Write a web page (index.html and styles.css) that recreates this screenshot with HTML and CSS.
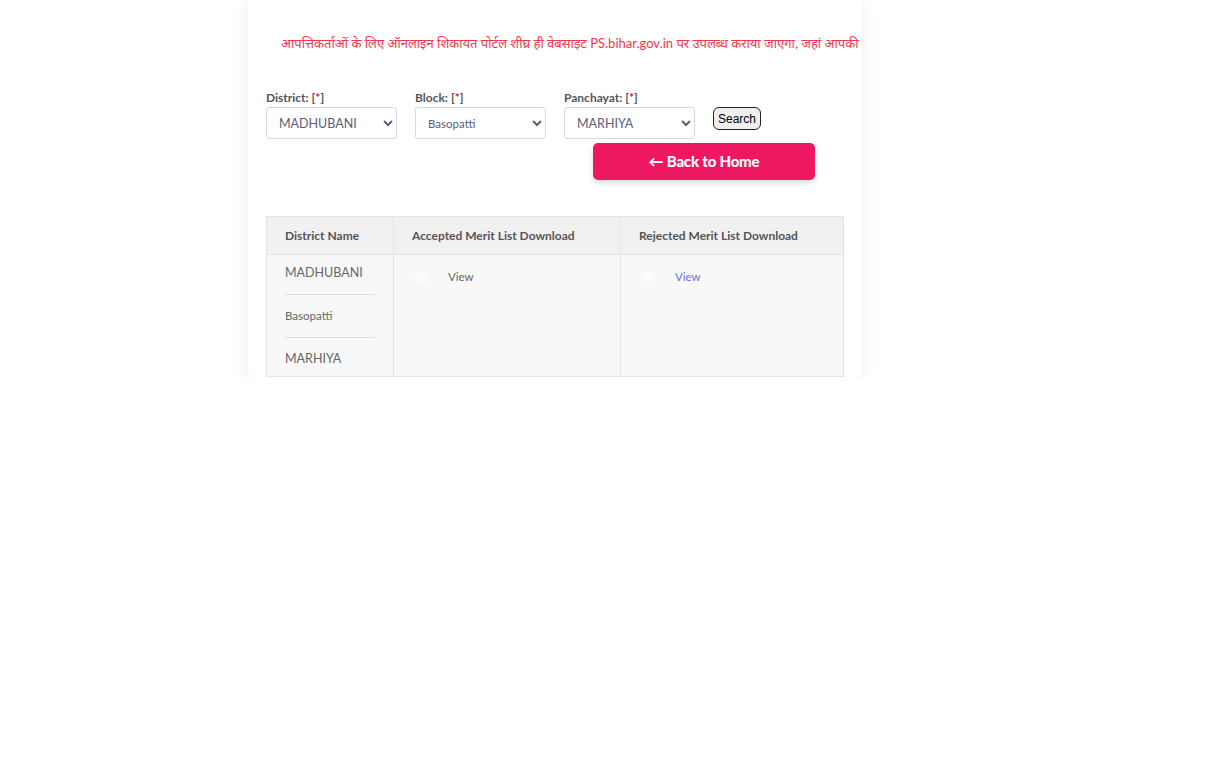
FILE: index.html
```html
<!DOCTYPE html>
<html lang="hi">

<head>
  <meta charset="UTF-8" />
  <meta name="viewport" content="width=device-width, initial-scale=1.0" />
  <title>Merit List</title>
  <link rel="stylesheet" href="styles.css">
</head>

<body>
  <div class="card">
    <!-- Notice strip -->
    <div class="notice">
      <span>आपत्तिकर्ताओं के लिए ऑनलाइन शिकायत पोर्टल शीघ्र ही वेबसाइट PS.bihar.gov.in पर उपलब्ध कराया जाएगा, जहां आपकी आपत्ति दर्ज की जा सकेगी।</span>
    </div>

    <!-- Filters -->
    <form class="filters">
      <div class="field">
        <label for="district">District: [<span class="req">*</span>]</label>
        <select id="district">
          <option>MADHUBANI</option>
        </select>
      </div>
      <div class="field">
        <label for="block">Block: [<span class="req">*</span>]</label>
        <select id="block" class="small">
          <option>Basopatti</option>
        </select>
      </div>
      <div class="field">
        <label for="panchayat">Panchayat: [<span class="req">*</span>]</label>
        <select id="panchayat">
          <option>MARHIYA</option>
        </select>
      </div>
      <button type="button" class="search">Search</button>
    </form>

    <div class="home-row">
      <a href="#" class="home-btn">&larr; Back to Home</a>
    </div>

    <!-- Result table -->
    <table class="merit">
      <thead>
        <tr>
          <th class="col-name">District Name</th>
          <th class="col-acc">Accepted Merit List Download</th>
          <th>Rejected Merit List Download</th>
        </tr>
      </thead>
      <tbody>
        <tr>
          <td class="names">
            <div class="name-item">MADHUBANI</div>
            <div class="name-item small">Basopatti</div>
            <div class="name-item">MARHIYA</div>
          </td>
          <td class="view-cell"><span class="dot"></span><a href="#" class="view plain">View</a></td>
          <td class="view-cell"><span class="dot"></span><a href="#" class="view">View</a></td>
        </tr>
      </tbody>
    </table>
  </div>
</body>

</html>
```

FILE: styles.css
```css
/* Page */
body {
  margin: 0;
  background-color: #ffffff;
  font-family: 'Lato', 'Noto Sans', sans-serif;
  color: #555;
}

/* White card */
.card {
  width: 578px;
  margin-left: 248px;
  padding: 0 18px;
  background-color: #fff;
  border-radius: 0 0 6px 6px;
  box-shadow: 0 4px 18px rgba(0, 0, 0, 0.08);
  overflow: hidden;
}

/* Notice strip */
.notice {
  padding: 34px 0 0 15px;
  margin-right: -18px;
  white-space: nowrap;
  overflow: hidden;
  color: #f5364a;
  font-size: 13px;
  line-height: 18px;
}

/* Filters */
.filters {
  display: flex;
  align-items: flex-start;
  gap: 18px;
  margin-top: 39px;
}

.field label {
  display: block;
  font-size: 12px;
  font-weight: bold;
  color: #555;
  line-height: 14px;
  margin-bottom: 2px;
}

.req {
  color: #e8102e;
}

.field select {
  width: 131px;
  height: 32px;
  padding: 0 8px;
  border: 1px solid #d8d8e8;
  border-radius: 3px;
  background-color: #fff;
  color: #5d5d78;
  font-family: 'Lato', sans-serif;
  font-size: 12.5px;
}

.field select.small {
  font-size: 11.5px;
}

.search {
  margin-top: 16px;
  height: 23px;
  padding: 0 4px;
  border: 1px solid #222;
  border-radius: 6px;
  background-color: #efefef;
  font-family: 'Liberation Sans', Arial, sans-serif;
  font-size: 12px;
  color: #000;
}

/* Back to home */
.home-row {
  display: flex;
  padding-left: 327px;
  margin-top: 4px;
}

.home-btn {
  display: block;
  width: 222px;
  height: 37px;
  line-height: 36px;
  text-align: center;
  background-color: #ee1862;
  color: #fff;
  border-radius: 5px;
  font-size: 15px;
  font-weight: 900;
  text-decoration: none;
  letter-spacing: -0.2px;
  box-shadow: 0 3px 6px rgba(0, 0, 0, 0.15);
}

/* Table */
.merit {
  width: 100%;
  margin-top: 36px;
  border-collapse: collapse;
  font-size: 12px;
}

.merit th,
.merit td {
  border: 1px solid #e3e3f0;
  text-align: left;
  vertical-align: top;
}

.merit th {
  background-color: #f1f1f1;
  padding: 10px 18px;
  line-height: 17px;
  font-weight: bold;
  color: #555;
}

.col-name {
  width: 90px;
}

.col-acc {
  width: 190px;
}

.merit td {
  background-color: #f8f8f8;
}

.names {
  padding: 0 18px;
}

.name-item {
  padding: 12px 0;
  line-height: 18px;
  border-bottom: 1px solid #dcdcdc;
  color: #666;
  font-size: 12.5px;
}

.name-item:first-child {
  padding-top: 9px;
}

.name-item:last-child {
  border-bottom: none;
  padding-bottom: 8px;
}

.name-item.small {
  font-size: 11.5px;
}

.view-cell {
  padding: 13px 18px;
  line-height: 18px;
}

.dot {
  display: inline-block;
  width: 14px;
  height: 14px;
  margin: 0 20px 0 2px;
  border-radius: 50%;
  background-color: #fbfbfb;
  vertical-align: middle;
}

.view {
  font-size: 11.5px;
  color: #6b6bf2;
  text-decoration: none;
}

.view.plain {
  color: #666;
}
```
